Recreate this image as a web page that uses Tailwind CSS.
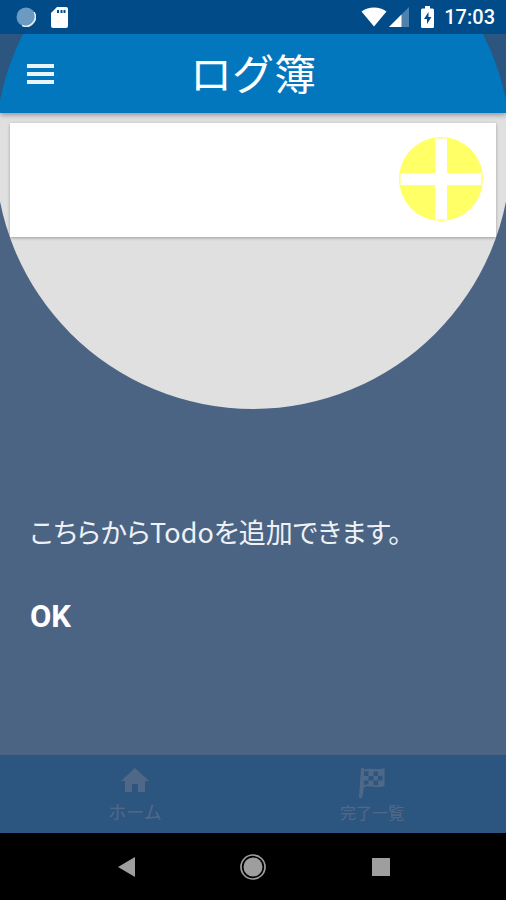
<!DOCTYPE html>
<html lang="ja">
<head>
<meta charset="utf-8">
<meta name="viewport" content="width=device-width, initial-scale=1">
<title>ログ簿</title>
<script src="https://cdn.jsdelivr.net/npm/@tailwindcss/browser@4"></script>
</head>
<body class="flex min-h-screen flex-col bg-black font-['Roboto','Noto_Sans_CJK_JP',sans-serif] text-white">
  <!-- System status bar -->
  <div class="flex h-[34px] shrink-0 items-center bg-[#014b88] pr-[11px] pl-4">
    <svg class="size-5" viewBox="0 0 20 20" aria-hidden="true">
      <circle cx="10" cy="10" r="9.5" fill="#6b9ac2"/>
      <path d="M18.2 5A9.5 9.5 0 0 1 6 18.600 10 10 0 0 0 18.2 5Z" fill="#e8f1f8" stroke="#e8f1f8"/>
    </svg>
    <svg class="ml-[15px] h-[21px] w-[17px]" viewBox="0 0 17 21" aria-hidden="true">
      <path d="M6 0h9a2 2 0 0 1 2 2v17a2 2 0 0 1-2 2H2a2 2 0 0 1-2-2V6Z" fill="#fff"/>
      <path d="M6 3h2v3H6zM9.500 3h2v3h-2zM12.500 3h2v3h-2z" fill="#014b88"/>
    </svg>
    <svg class="ml-auto h-5 w-[26px]" viewBox="0 0 26 20" aria-hidden="true">
      <path d="M0.500 4.500C7.500-1 18.500-1 25.500 4.500L13 19.500Z" fill="#fff"/>
    </svg>
    <svg class="ml-[2px] size-5" viewBox="0 0 20 20" aria-hidden="true">
      <path d="M20 0V20H0Z" fill="#4d82af"/>
      <path d="M12.500 7.500V20H0Z" fill="#fff"/>
    </svg>
    <svg class="ml-3 h-[22px] w-[13px]" viewBox="0 0 13 22" aria-hidden="true">
      <path d="M4 0h5v2.500h2.500A1.500 1.500 0 0 1 13 4v16.500a1.500 1.500 0 0 1-1.500 1.500h-10A1.500 1.500 0 0 1 0 20.500V4a1.500 1.500 0 0 1 1.500-1.500H4Z" fill="#fff"/>
      <path d="M7.500 6 3 13h3v5l4.500-7H7.500Z" fill="#014b88"/>
    </svg>
    <time class="ml-[10px] text-[20px] leading-6 font-medium">17:03</time>
  </div>

  <div class="relative flex flex-1 flex-col overflow-hidden bg-[#e0e0e0]">
    <header class="relative grid h-[79px] shrink-0 grid-cols-[80px_1fr_80px] items-center bg-[#0277bd] shadow-[0_2px_5px_rgba(0,0,0,0.35)]">
      <button type="button" aria-label="メニュー" class="flex h-full items-center justify-center">
        <svg class="h-5 w-[27px]" viewBox="0 0 27 20" aria-hidden="true"><path d="M0 0h27v4H0zM0 8h27v4H0zM0 16h27v4H0z" fill="#e9f3fa"/></svg>
      </button>
      <h1 class="pb-1 text-center font-['Noto_Sans_CJK_JP',sans-serif] text-[42px] leading-[60px] font-normal">ログ簿</h1>
    </header>

    <main class="flex-1 px-[10px] pt-[10px]">
      <section class="flex justify-end bg-white px-[13px] pt-[14px] pb-4 shadow-[0_1px_3px_rgba(0,0,0,0.3)]">
        <button type="button" aria-label="Todoを追加" class="size-[84px]">
          <svg class="size-full" viewBox="0 0 84 84" aria-hidden="true">
            <circle cx="42" cy="42" r="42" fill="#ffff66"/>
            <path d="M36 1.500h12V36h34.500v12H48v34.500H36V48H1.500V36H36Z" fill="#fff"/>
          </svg>
        </button>
      </section>
    </main>

    <nav class="grid h-[78px] shrink-0 grid-cols-[270fr_236fr] bg-[#0277bd] font-['Noto_Sans_CJK_JP',sans-serif] text-white">
      <a href="#home" class="flex flex-col items-center pt-[13px]">
        <svg class="h-6 w-7" viewBox="0 0 28 24" fill="currentColor" aria-hidden="true"><path d="M14 0 28 13h-4v11h-7v-8h-6v8H4V13H0Z"/></svg>
        <span class="mt-[7px] text-[18px] leading-6">ホーム</span>
      </a>
      <a href="#done" class="-ml-8 flex flex-col items-center pt-[13px]">
        <svg class="h-[30px] w-[26px]" viewBox="0 0 26 30" fill="currentColor" aria-hidden="true">
          <path fill-rule="evenodd" d="M2 0h3v1.500C11-1 17 3 25.500 0V18C17 21 11 16.500 5 19L3 30H0ZM5 3.500v4.500h4.500V3Zm9.500 0v4.500H19V3.500ZM9.500 8v4.500h5V8ZM19 8v4.500h4.500V7.500ZM5 12.500V17l4.500-1V12.500Zm9.500 0v4.500l4.500.500v-5Z"/>
        </svg>
        <span class="mt-[2px] text-[16px] leading-6">完了一覧</span>
      </a>
    </nav>

    <!-- Tutorial overlay with a round cut-out around the add button's card -->
    <div role="dialog" aria-labelledby="tip" class="absolute inset-0 overflow-hidden">
      <div class="absolute -top-[141px] left-1/2 size-[516px] -translate-x-1/2 rounded-full shadow-[0_0_0_2000px_rgba(51,79,117,0.86)]"></div>
      <div class="relative flex flex-col items-start px-[30px] pt-[478px]">
        <p id="tip" class="font-['Noto_Sans_CJK_JP',sans-serif] text-[27px] leading-10 text-[#eef2f7] [font-feature-settings:'palt']">こちらからTodoを追加できます。</p>
        <button type="button" class="mt-[45px] text-[31px] leading-10 font-bold">OK</button>
      </div>
    </div>
  </div>

  <!-- System navigation -->
  <div class="grid h-[67px] shrink-0 grid-cols-4 items-center bg-black text-[#9e9e9e]">
    <button type="button" aria-label="戻る" class="col-start-1 justify-self-end"><svg class="-mr-2 h-5 w-[17px]" viewBox="0 0 17 20" fill="currentColor" aria-hidden="true"><path d="M17 0v20L0 10Z"/></svg></button>
    <button type="button" aria-label="ホーム画面" class="col-span-2 justify-self-center"><svg class="size-[26px]" viewBox="0 0 26 26" aria-hidden="true"><circle cx="13" cy="13" r="12" fill="none" stroke="currentColor" stroke-width="1.700"/><circle cx="13" cy="13" r="9.500" fill="currentColor"/></svg></button>
    <button type="button" aria-label="アプリ履歴" class="justify-self-start"><svg class="-ml-2 size-[18px]" viewBox="0 0 18 18" fill="currentColor" aria-hidden="true"><path d="M0 0h18v18H0z"/></svg></button>
  </div>
</body>
</html>
